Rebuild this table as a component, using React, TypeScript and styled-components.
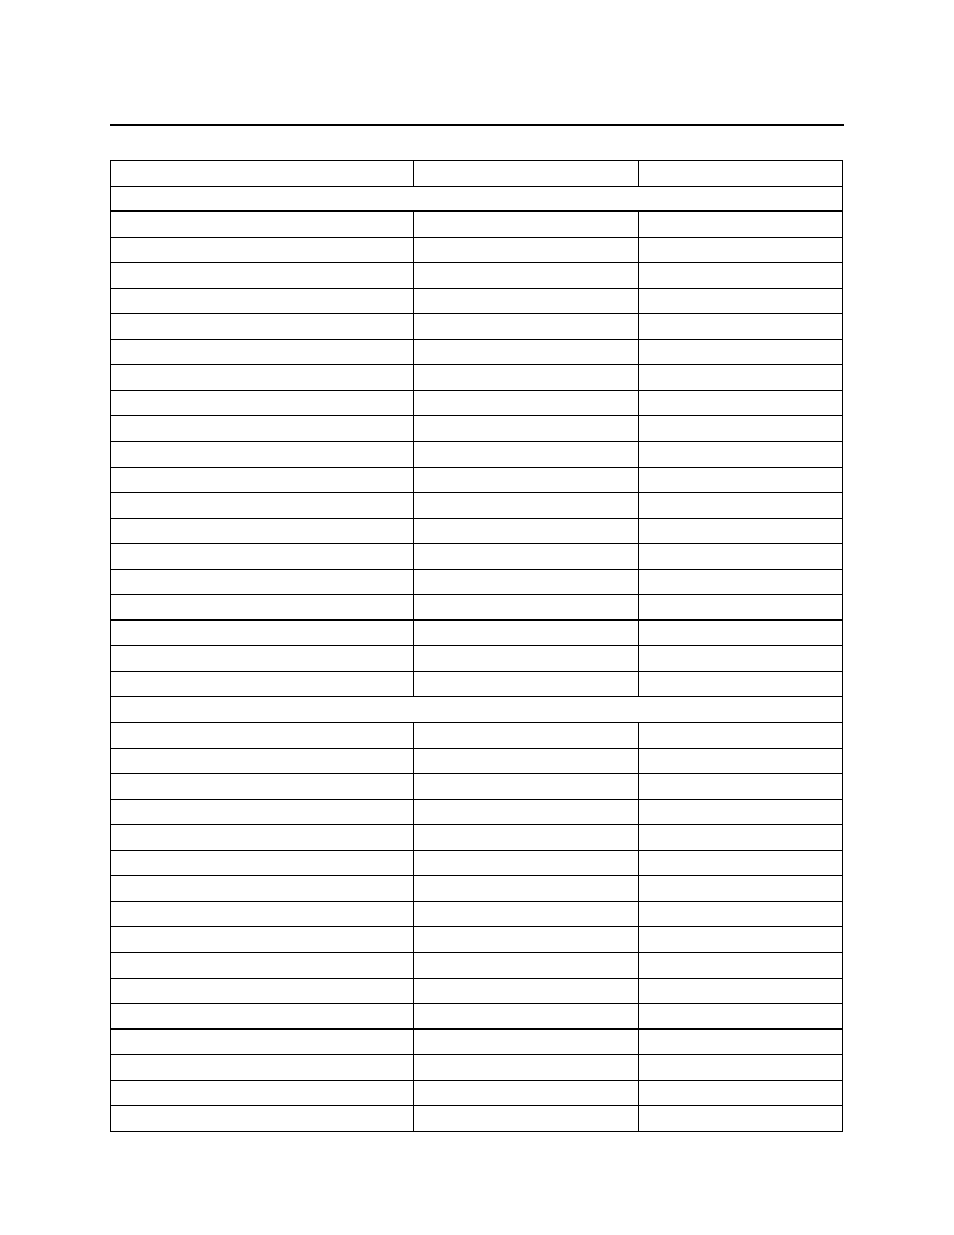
import React from 'react'
import styled, { createGlobalStyle } from 'styled-components'

const GlobalStyle = createGlobalStyle`
  html, body {
    margin: 0;
    padding: 0;
    background: #ffffff;
    font-family: "Liberation Serif", serif;
  }
`

const Page = styled.div`
  width: 954px;
  height: 1235px;
  padding: 124px 0 0 110px;
  box-sizing: border-box;
`

const Rule = styled.div`
  width: 734px;
  height: 2px;
  background: #000;
  margin-bottom: 34px;
`

const Table = styled.div`
  width: 733px;
  border-top: 1px solid #000;
  border-left: 1px solid #000;
  box-sizing: border-box;
`

const Row = styled.div<{ $thick?: boolean }>`
  display: grid;
  grid-template-columns: 303px 225px 204px;
  height: 25.56px;
  box-sizing: border-box;
  border-bottom: ${(p) => (p.$thick ? '2px' : '1px')} solid #000;
`

const Cell = styled.div`
  border-right: 1px solid #000;
`

const SpanCell = styled.div`
  grid-column: 1 / span 3;
  border-right: 1px solid #000;
`

type RowKind = 'data' | 'section' | 'thick' | 'sectionThick'

const rows: RowKind[] = [
  'data',
  'sectionThick',
  ...Array<RowKind>(15).fill('data'),
  'thick',
  'data',
  'data',
  'data',
  'section',
  ...Array<RowKind>(11).fill('data'),
  'thick',
  'data',
  'data',
  'data',
  'data',
]

const App: React.FC = () => {
  return (
    <>
      <GlobalStyle />
      <Page>
        <Rule />
        <Table>
          {rows.map((kind, i) => {
            const thick = kind === 'thick' || kind === 'sectionThick'
            const span = kind === 'section' || kind === 'sectionThick'
            return (
              <Row key={i} $thick={thick}>
                {span ? (
                  <SpanCell />
                ) : (
                  <>
                    <Cell />
                    <Cell />
                    <Cell />
                  </>
                )}
              </Row>
            )
          })}
        </Table>
      </Page>
    </>
  )
}

export default App
